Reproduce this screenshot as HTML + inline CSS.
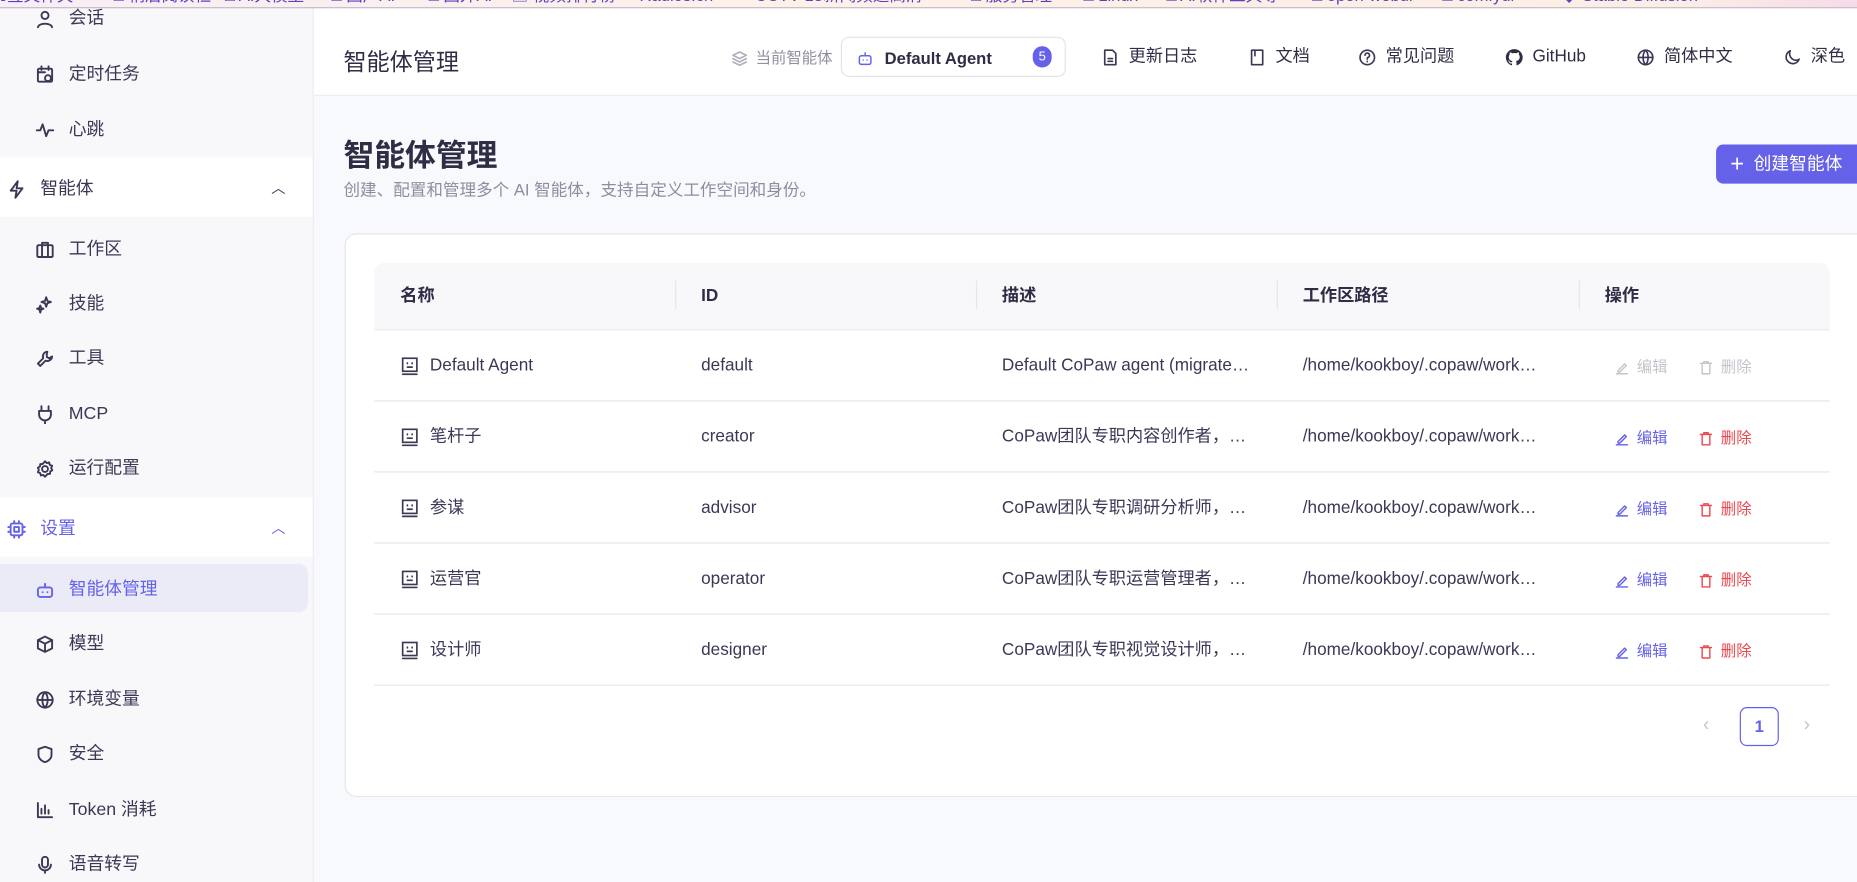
<!DOCTYPE html>
<html><head><meta charset="utf-8"><style>
*{box-sizing:border-box;margin:0;padding:0}
html,body{width:1857px;height:882px;overflow:hidden;background:#f8f9fc}
#w{width:1568px;height:745px;transform:scale(1.18431);transform-origin:0 0;position:relative;font-family:"Liberation Sans","Noto Sans CJK SC",sans-serif;color:#3b3856;overflow:hidden}
.abs{position:absolute}
#bm{left:0;top:0;width:1568px;height:7px;background:linear-gradient(90deg,#f7eef6,#fdf1e8 40%,#fbefe5 90%,#f6dbe8);border-bottom:1px solid #c9b8c8;overflow:hidden;z-index:5}
#bm span{position:absolute;top:-13px;font-size:14px;line-height:18px;color:#5a3fc0;white-space:nowrap}
#side{left:0;top:7px;width:265px;height:738px;background:#f8f8fa;border-right:1px solid #ececf0}
.it{position:absolute;left:30px;font-size:15px;line-height:18px;height:18px;display:flex;align-items:center;gap:12px;color:#3b3856;transform:translateY(2px)}
.it svg{width:16px;height:16px;fill:none;stroke:#3b3856;stroke-width:1.6;stroke-linecap:round;stroke-linejoin:round}
.grp{position:absolute;left:0;width:264px;height:50px;background:#fff}
#hdr{left:265px;top:7px;width:1303px;height:74px;background:#fff;border-bottom:1px solid #ebebf0}
.nv{position:absolute;font-size:14.5px;line-height:18px;height:18px;display:flex;align-items:center;gap:8px;color:#2f2d45;transform:translateY(1px)}
.nv svg{width:15px;height:15px;fill:none;stroke:#3b3856;stroke-width:1.5;stroke-linecap:round;stroke-linejoin:round}
#card{left:291px;top:197px;width:1320px;height:476px;background:#fff;border:1px solid #e6e6ec;border-radius:10px}
.th{position:absolute;top:222px;left:316px;width:1229px;height:57px;background:#f8f8fa;border-radius:8px 8px 0 0;border-bottom:1px solid #e6e6ec}
.c{position:absolute;font-size:14.5px;line-height:18px;height:18px;white-space:nowrap;display:flex;align-items:center}
.hd{font-weight:bold;color:#2f2d45;top:241px}
.sep{position:absolute;top:237px;width:1px;height:24px;background:#e5e5ea}
.row{position:absolute;left:316px;width:1229px;height:60px;border-bottom:1px solid #e6e6ec}
.ag{width:16px;height:16px;fill:none;stroke:#3b3856;stroke-width:1.4;stroke-linecap:round;margin-right:9px}
.a{font-size:13px;gap:6px}
.a svg{width:13px;height:13px;fill:none;stroke-width:1.3;stroke-linecap:round;stroke-linejoin:round}
.e{color:#6561e8}.e svg{stroke:#6561e8}
.d{color:#f0474f}.d svg{stroke:#f0474f}
.g{color:#c4c4cc}.g svg{stroke:#c4c4cc}
</style></head><body><div id="w">
<div id="bm" class="abs"><span style="left:-8px">书签文件夹</span><span style="left:96px">□ 稍后阅读栏</span><span style="left:190px">□ AI大模型</span><span style="left:280px">□ 国产AI</span><span style="left:362px">□ 国外AI</span><span style="left:432px">▣ 视频排行榜</span><span style="left:540px">Radios.cn</span><span style="left:625px">● CCTV-13新闻频道高清</span><span style="left:820px">□ 服务管理</span><span style="left:915px">□ Linux</span><span style="left:985px">□ AI软件工具等</span><span style="left:1108px">□ open-webui</span><span style="left:1218px">□ comfyui</span><span style="left:1318px">◆ Stable Diffusion</span></div>

<div id="side" class="abs"></div>
<div class="grp" style="top:133px"></div>
<div class="grp" style="top:420px"></div>
<div class="abs" style="left:0;top:476px;width:260px;height:41px;background:#ebebf8;border-radius:0 8px 8px 0"></div>

<div class="it" style="top:5px"><svg viewBox="0 0 16 16"><circle cx="8" cy="5" r="3"/><path d="M2 15c1-4 11-4 12 0"/></svg>会话</div>
<div class="it" style="top:52px"><svg viewBox="0 0 16 16"><rect x="2" y="3" width="12" height="11" rx="1"/><path d="M5 1v3M11 1v3M2 6h6"/><circle cx="10.5" cy="11" r="2.5"/></svg>定时任务</div>
<div class="it" style="top:99px"><svg viewBox="0 0 16 16"><path d="M1 8h3l2-5 3 10 2-5h4"/></svg>心跳</div>
<div class="it" style="top:149px;left:6px"><svg viewBox="0 0 16 16"><path d="M9 1L3 9h5l-1 6 6-8H8z"/></svg>智能体</div>
<div class="abs" style="left:229px;top:150px;font-size:12px">︿</div>
<div class="it" style="top:200px"><svg viewBox="0 0 16 16"><rect x="1.5" y="4" width="13" height="10" rx="1"/><path d="M5.5 4V2h5v2M5.5 4v10M10.5 4v10"/></svg>工作区</div>
<div class="it" style="top:246px"><svg viewBox="0 0 16 16"><path d="M9 2l1 3 3 1-3 1-1 3-1-3-3-1 3-1zM4 9l.7 2 2 .7-2 .7L4 15l-.7-2.6-2-.7 2-.7z"/></svg>技能</div>
<div class="it" style="top:292px"><svg viewBox="0 0 16 16"><path d="M10 2a4 4 0 0 0-3.5 5.5L2 12l2 2 4.5-4.5A4 4 0 0 0 14 6l-2.5 1.5-2-1V4z"/></svg>工具</div>
<div class="it" style="top:339px"><svg viewBox="0 0 16 16"><path d="M5 1v4M11 1v4M3 5h10v3a5 5 0 0 1-10 0zM8 13v3"/></svg>MCP</div>
<div class="it" style="top:385px"><svg viewBox="0 0 16 16"><circle cx="8" cy="8" r="2.5"/><path d="M8 1.5l1.5 1.5 2-.5.5 2 2 .8-.8 2 1 1.7-1.8 1.2-.2 2-2 0L8 14.5 6.5 13l-2 .5-.5-2-2-.8.8-2L2 7l1.8-1.2.2-2 2 0z"/></svg>运行配置</div>
<div class="it" style="top:436px;left:6px;color:#6561e8"><svg viewBox="0 0 16 16" style="stroke:#6561e8"><rect x="3" y="3" width="10" height="10" rx="1.5"/><rect x="6" y="6" width="4" height="4"/><path d="M6 1v2M10 1v2M6 13v2M10 13v2M1 6h2M1 10h2M13 6h2M13 10h2"/></svg>设置</div>
<div class="abs" style="left:229px;top:437px;font-size:12px;color:#6561e8">︿</div>
<div class="it" style="top:487px;color:#6561e8"><svg viewBox="0 0 16 16" style="stroke:#6561e8"><rect x="2" y="6" width="12" height="8" rx="2"/><path d="M8 3v3M6 10h.01M10 10h.01"/></svg>智能体管理</div>
<div class="it" style="top:533px"><svg viewBox="0 0 16 16"><path d="M8 1.5l6 3v7l-6 3-6-3v-7zM2 4.5l6 3 6-3M8 7.5v7"/></svg>模型</div>
<div class="it" style="top:580px"><svg viewBox="0 0 16 16"><circle cx="8" cy="8" r="6.5"/><path d="M1.5 8h13M8 1.5c-3 3-3 10 0 13M8 1.5c3 3 3 10 0 13"/></svg>环境变量</div>
<div class="it" style="top:626px"><svg viewBox="0 0 16 16"><path d="M8 1.5l5.5 2v5c0 3-3 5.5-5.5 6-2.5-.5-5.5-3-5.5-6v-5z"/></svg>安全</div>
<div class="it" style="top:673px"><svg viewBox="0 0 16 16"><path d="M2 2v12h12M5 11V7M8 11V4M11 11V8"/></svg>Token 消耗</div>
<div class="it" style="top:719px"><svg viewBox="0 0 16 16"><rect x="5.5" y="1.5" width="5" height="9" rx="2.5"/><path d="M3 8a5 5 0 0 0 10 0M8 13v2"/></svg>语音转写</div>

<div id="hdr" class="abs"></div>
<div class="abs" style="left:290px;top:36px;font-size:19.5px;color:#2f2d45">智能体管理</div>
<div class="nv" style="left:617px;top:39px;font-size:13px;color:#8f8fa0;gap:6px"><svg viewBox="0 0 16 16" style="stroke:#b0b0bc"><path d="M8 2l6 3-6 3-6-3zM2 8l6 3 6-3M2 11l6 3 6-3"/></svg>当前智能体</div>
<div class="abs" style="left:710px;top:31px;width:190px;height:34px;border:1px solid #e3e3ea;border-radius:7px;background:#fff"></div>
<div class="nv" style="left:724px;top:39px;font-size:14px;font-weight:bold;gap:10px"><svg viewBox="0 0 16 16" style="stroke:#6561e8;width:13px"><rect x="2" y="5" width="12" height="9" rx="2"/><path d="M8 2v3M6 9.5h.01M10 9.5h.01"/></svg>Default Agent</div>
<div class="abs" style="left:872px;top:39px;width:16px;height:18px;border-radius:9px;background:#6561e8;color:#fff;font-size:11px;text-align:center;line-height:18px">5</div>
<div class="nv" style="left:930px;top:38px"><svg viewBox="0 0 16 16"><path d="M3 1.5h7l3 3v10H3zM6 9h4M6 11.5h4"/></svg>更新日志</div>
<div class="nv" style="left:1054px;top:38px"><svg viewBox="0 0 16 16"><path d="M3 1.5h10v13H3zM6 1.5v5"/></svg>文档</div>
<div class="nv" style="left:1147px;top:38px"><svg viewBox="0 0 16 16"><circle cx="8" cy="8" r="6.5"/><path d="M6 6a2 2 0 1 1 2.5 2c-.5.2-.5.8-.5 1.5M8 11.5v.3"/></svg>常见问题</div>
<div class="nv" style="left:1271px;top:38px"><svg viewBox="0 0 16 16" style="fill:#2f2d45;stroke:none"><path d="M8 .5a7.5 7.5 0 0 0-2.4 14.6c.4.1.5-.2.5-.4v-1.3c-2.1.5-2.5-1-2.5-1-.4-.9-.9-1.1-.9-1.1-.7-.5 0-.5 0-.5.8.1 1.2.8 1.2.8.7 1.2 1.8.8 2.200.6.1-.5.3-.8.5-1-1.7-.2-3.4-.8-3.4-3.7 0-.8.3-1.500.8-2-.1-.2-.3-1 .1-2 0 0 .6-.2 2.1.8a7 7 0 0 1 3.8 0c1.4-1 2.1-.8 2.1-.8.4 1 .2 1.8.1 2 .5.5.8 1.2.8 2 0 2.9-1.8 3.5-3.4 3.700.3.2.5.7.5 1.4v2.1c0 .2.1.5.5.4A7.5 7.5 0 0 0 8 .5z"/></svg>GitHub</div>
<div class="nv" style="left:1382px;top:38px"><svg viewBox="0 0 16 16"><circle cx="8" cy="8" r="6.5"/><path d="M1.5 8h13M8 1.5c-3 3-3 10 0 13M8 1.5c3 3 3 10 0 13"/></svg>简体中文</div>
<div class="nv" style="left:1506px;top:38px"><svg viewBox="0 0 16 16"><path d="M12 10.5A6 6 0 0 1 6 2a6 6 0 1 0 8 7.5 6 6 0 0 1-2 1z"/></svg>深色</div>

<div class="abs" style="left:290px;top:111px;font-size:26px;font-weight:bold;color:#2f2d45">智能体管理</div>
<div class="abs" style="left:290px;top:150px;font-size:14px;color:#8d8da0">创建、配置和管理多个 AI 智能体，支持自定义工作空间和身份。</div>
<div class="abs" style="left:1449px;top:122px;width:125px;height:33px;background:#6561e8;border-radius:6px;color:#fff;font-size:15px;line-height:33px;padding-left:12px"><span style="font-size:20px;vertical-align:-2px;margin-right:8px">+</span>创建智能体</div>

<div id="card" class="abs"></div>
<div class="th"></div>
<div class="c hd" style="left:338px">名称</div>
<div class="sep" style="left:570px"></div>
<div class="c hd" style="left:592px">ID</div>
<div class="sep" style="left:824px"></div>
<div class="c hd" style="left:846px">描述</div>
<div class="sep" style="left:1078px"></div>
<div class="c hd" style="left:1100px">工作区路径</div>
<div class="sep" style="left:1333px"></div>
<div class="c hd" style="left:1355px">操作</div>

<div class="row" style="top:279px"></div>
<div class="row" style="top:339px"></div>
<div class="row" style="top:399px"></div>
<div class="row" style="top:459px"></div>
<div class="row" style="top:519px"></div>

<div class="c" style="left:338px;top:300px"><svg class="ag" viewBox="0 0 16 16"><rect x="2" y="1.5" width="12" height="11"/><path d="M2 15h12M6 5.5v.5M10 5.5v.5M6 9h4"/></svg>Default Agent</div>
<div class="c" style="left:592px;top:300px">default</div>
<div class="c" style="left:846px;top:300px">Default CoPaw agent (migrate…</div>
<div class="c" style="left:1100px;top:300px">/home/kookboy/.copaw/work…</div>

<div class="c" style="left:338px;top:360px"><svg class="ag" viewBox="0 0 16 16"><rect x="2" y="1.5" width="12" height="11"/><path d="M2 15h12M6 5.5v.5M10 5.5v.5M6 9h4"/></svg>笔杆子</div>
<div class="c" style="left:592px;top:360px">creator</div>
<div class="c" style="left:846px;top:360px">CoPaw团队专职内容创作者，…</div>
<div class="c" style="left:1100px;top:360px">/home/kookboy/.copaw/work…</div>

<div class="c" style="left:338px;top:420px"><svg class="ag" viewBox="0 0 16 16"><rect x="2" y="1.5" width="12" height="11"/><path d="M2 15h12M6 5.5v.5M10 5.5v.5M6 9h4"/></svg>参谋</div>
<div class="c" style="left:592px;top:420px">advisor</div>
<div class="c" style="left:846px;top:420px">CoPaw团队专职调研分析师，…</div>
<div class="c" style="left:1100px;top:420px">/home/kookboy/.copaw/work…</div>

<div class="c" style="left:338px;top:480px"><svg class="ag" viewBox="0 0 16 16"><rect x="2" y="1.5" width="12" height="11"/><path d="M2 15h12M6 5.5v.5M10 5.5v.5M6 9h4"/></svg>运营官</div>
<div class="c" style="left:592px;top:480px">operator</div>
<div class="c" style="left:846px;top:480px">CoPaw团队专职运营管理者，…</div>
<div class="c" style="left:1100px;top:480px">/home/kookboy/.copaw/work…</div>

<div class="c" style="left:338px;top:540px"><svg class="ag" viewBox="0 0 16 16"><rect x="2" y="1.5" width="12" height="11"/><path d="M2 15h12M6 5.5v.5M10 5.5v.5M6 9h4"/></svg>设计师</div>
<div class="c" style="left:592px;top:540px">designer</div>
<div class="c" style="left:846px;top:540px">CoPaw团队专职视觉设计师，…</div>
<div class="c" style="left:1100px;top:540px">/home/kookboy/.copaw/work…</div>

<div class="c a g" style="left:1363px;top:301px"><svg viewBox="0 0 14 14"><path d="M2 12.5h10M3.5 9.5l6-6 1.5 1.5-6 6H3.5z"/></svg>编辑</div>
<div class="c a g" style="left:1434px;top:301px"><svg viewBox="0 0 14 14"><path d="M2 3h10M5 3V1.5h4V3M3.5 3v9.5h7V3"/></svg>删除</div>
<div class="c a e" style="left:1363px;top:361px"><svg viewBox="0 0 14 14"><path d="M2 12.5h10M3.5 9.5l6-6 1.5 1.5-6 6H3.5z"/></svg>编辑</div>
<div class="c a d" style="left:1434px;top:361px"><svg viewBox="0 0 14 14"><path d="M2 3h10M5 3V1.5h4V3M3.5 3v9.5h7V3"/></svg>删除</div>
<div class="c a e" style="left:1363px;top:421px"><svg viewBox="0 0 14 14"><path d="M2 12.5h10M3.5 9.5l6-6 1.5 1.5-6 6H3.5z"/></svg>编辑</div>
<div class="c a d" style="left:1434px;top:421px"><svg viewBox="0 0 14 14"><path d="M2 3h10M5 3V1.5h4V3M3.5 3v9.5h7V3"/></svg>删除</div>
<div class="c a e" style="left:1363px;top:481px"><svg viewBox="0 0 14 14"><path d="M2 12.5h10M3.5 9.5l6-6 1.5 1.5-6 6H3.5z"/></svg>编辑</div>
<div class="c a d" style="left:1434px;top:481px"><svg viewBox="0 0 14 14"><path d="M2 3h10M5 3V1.5h4V3M3.5 3v9.5h7V3"/></svg>删除</div>
<div class="c a e" style="left:1363px;top:541px"><svg viewBox="0 0 14 14"><path d="M2 12.5h10M3.5 9.5l6-6 1.5 1.5-6 6H3.5z"/></svg>编辑</div>
<div class="c a d" style="left:1434px;top:541px"><svg viewBox="0 0 14 14"><path d="M2 3h10M5 3V1.5h4V3M3.5 3v9.5h7V3"/></svg>删除</div>

<div class="c" style="left:1438px;top:604px;color:#c4c4cc;font-size:16px">‹</div>
<div class="abs" style="left:1469px;top:597px;width:33px;height:33px;border:1px solid #6561e8;border-radius:6px;color:#6561e8;font-weight:bold;font-size:14px;text-align:center;line-height:31px">1</div>
<div class="c" style="left:1523px;top:604px;color:#c4c4cc;font-size:16px">›</div>
</div></body></html>
